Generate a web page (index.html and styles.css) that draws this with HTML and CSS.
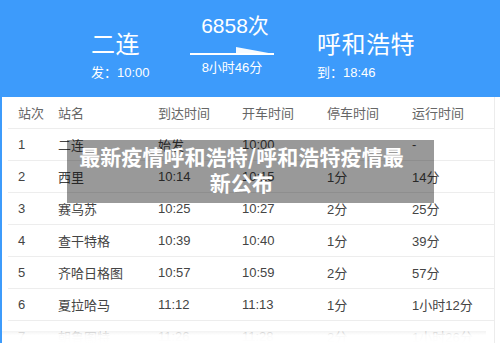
FILE: index.html
```html
<!DOCTYPE html>
<html>
<head>
<meta charset="utf-8">
<link rel="stylesheet" href="styles.css">
</head>
<body>
<div class="page">
  <header class="hero">
    <div class="stop from">
      <div class="city">二连</div>
      <div class="time">发：10:00</div>
    </div>
    <div class="train">
      <div class="code">6858次</div>
      <svg class="arrow" width="84" height="10" viewBox="0 0 84 10">
        <rect x="0" y="6" width="84" height="2" fill="#fff"/>
        <polygon points="46,0 84,7 46,7" fill="#fff" opacity="0.95"/>
      </svg>
      <div class="dur">8小时46分</div>
    </div>
    <div class="stop to">
      <div class="city">呼和浩特</div>
      <div class="time">到：18:46</div>
    </div>
  </header>
  <div class="tablewrap">
    <div class="row head">
      <span class="c1">站次</span><span class="c2">站名</span><span class="c3">到达时间</span><span class="c4">开车时间</span><span class="c5">停车时间</span><span class="c6">运行时间</span>
    </div>
    <div class="row"><span class="c1">1</span><span class="c2">二连</span><span class="c3">始发</span><span class="c4">10:00</span><span class="c5"></span><span class="c6">-</span></div>
    <div class="row"><span class="c1">2</span><span class="c2">西里</span><span class="c3">10:14</span><span class="c4">10:15</span><span class="c5">1分</span><span class="c6">14分</span></div>
    <div class="row"><span class="c1">3</span><span class="c2">赛乌苏</span><span class="c3">10:25</span><span class="c4">10:27</span><span class="c5">2分</span><span class="c6">25分</span></div>
    <div class="row"><span class="c1">4</span><span class="c2">查干特格</span><span class="c3">10:39</span><span class="c4">10:40</span><span class="c5">1分</span><span class="c6">39分</span></div>
    <div class="row"><span class="c1">5</span><span class="c2">齐哈日格图</span><span class="c3">10:57</span><span class="c4">10:59</span><span class="c5">2分</span><span class="c6">57分</span></div>
    <div class="row"><span class="c1">6</span><span class="c2">夏拉哈马</span><span class="c3">11:12</span><span class="c4">11:13</span><span class="c5">1分</span><span class="c6">1小时12分</span></div>
    <div class="row"><span class="c1">7</span><span class="c2">朝鲁图特</span><span class="c3">11:26</span><span class="c4">11:28</span><span class="c5">2分</span><span class="c6">1小时26分</span></div>
  </div>
  <div class="fade"></div>
  <div class="caption">最新疫情呼和浩特/呼和浩特疫情最<br>新公布</div>
</div>
</body>
</html>
```
FILE: styles.css
```css
html, body {
  margin: 0;
  padding: 0;
  background: #fff;
}
body {
  width: 500px;
  height: 343px;
  overflow: hidden;
  font-family: "Liberation Sans", "Noto Sans CJK SC", sans-serif;
}
.page {
  position: relative;
  width: 500px;
  height: 343px;
  overflow: hidden;
  border-left: 2px solid #3d9bfb;
  box-sizing: border-box;
}
.hero {
  height: 97px;
  background: #3d9bfb;
  color: #fff;
  display: flex;
  align-items: flex-start;
  box-sizing: border-box;
}
.stop {
  display: flex;
  flex-direction: column;
  padding-top: 31px;
}
.from {
  margin-left: 89px;
  width: 99px;
}
.to {
  margin-left: 43px;
}
.city {
  font-size: 24px;
  line-height: 28px;
  letter-spacing: 0.5px;
}
.time {
  font-size: 13px;
  line-height: 16px;
  margin-top: 6px;
}
.train {
  width: 84px;
  display: flex;
  flex-direction: column;
  align-items: center;
  padding-top: 13px;
}
.code {
  font-size: 21px;
  line-height: 26px;
  margin-left: 6px;
}
.arrow {
  display: block;
  margin-top: 8px;
}
.dur {
  font-size: 13px;
  line-height: 16px;
  margin-top: 3px;
}
.tablewrap {
  margin-left: 6px;
  width: 486px;
  border-right: 1px solid #ececec;
}
.row {
  display: flex;
  height: 31px;
  align-items: center;
  border-bottom: 1px solid #ededed;
  font-size: 13px;
  color: #444;
}
.row.head {
  color: #666;
}
.row span {
  display: block;
  padding-left: 10px;
  box-sizing: border-box;
  white-space: nowrap;
}
.c1 { width: 40px; }
.c2 { width: 100px; }
.c3 { width: 84px; }
.c4 { width: 85px; }
.c5 { width: 85px; }
.c6 { width: 80px; }
.fade {
  position: absolute;
  left: 0;
  top: 331px;
  width: 484px;
  height: 12px;
  background: linear-gradient(rgba(238,238,238,0.75), rgba(255,255,255,0.97) 35%, #fff);
}
.caption {
  position: absolute;
  left: 65px;
  top: 140px;
  width: 367px;
  height: 63px;
  box-sizing: border-box;
  padding: 3px 28px 0 10px;
  background: rgba(0,0,0,0.4);
  color: #fff;
  font-family: "Noto Sans CJK SC", sans-serif;
  font-weight: 700;
  font-size: 21px;
  line-height: 26px;
  letter-spacing: 0.1px;
  text-align: center;
  white-space: nowrap;
}
```
